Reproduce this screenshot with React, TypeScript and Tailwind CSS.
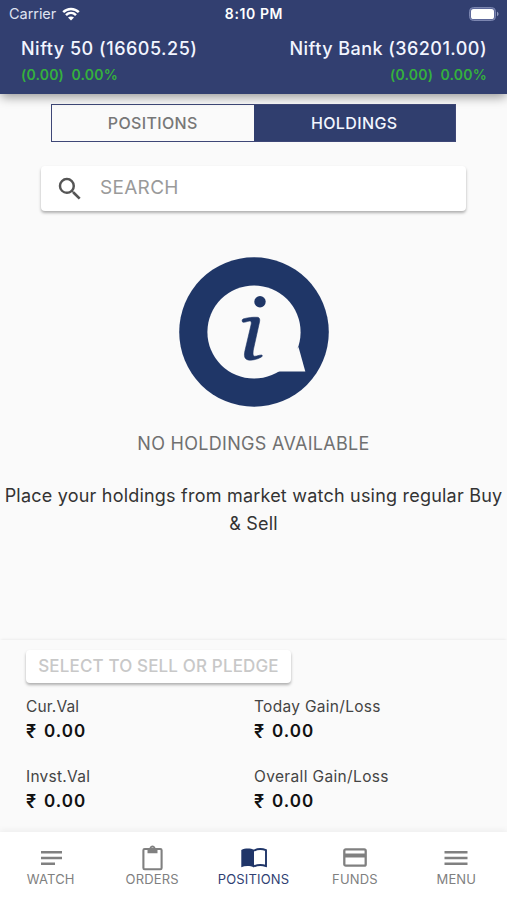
import React from "react";
import { MdSearch } from "react-icons/md";

function Wifi() {
  return (
    <svg width="18" height="14" viewBox="0 0 18 14" fill="none" stroke="#fff" strokeWidth="2.5">
      <path d="M1.2 5.2C5.6 .8 12.4 .8 16.8 5.2" />
      <path d="M4 8.2C6.9 5.4 11.1 5.4 14 8.2" />
      <path d="M9 13.6L6 10.6C7.7 9 10.3 9 12 10.6Z" fill="#fff" stroke="none" />
    </svg>
  );
}

function Battery() {
  return (
    <svg width="30" height="14" viewBox="0 0 30 14">
      <rect x="0.5" y="0.5" width="26" height="13" rx="4" fill="#5d689a" stroke="#7c86b0" />
      <rect x="2" y="2" width="23" height="10" rx="2.6" fill="#fff" />
      <path d="M28 4.8c2 .7 2 3.7 0 4.4z" fill="#8f99bd" />
    </svg>
  );
}

function Notes() {
  return (
    <svg width="22" height="16" viewBox="0 0 22 16" fill="none" stroke="currentColor" strokeWidth="2.4" className="translate-x-[0.5px]">
      <path d="M.5 2.200H21.500M.5 8H21.500M.5 13.800H14.500" />
    </svg>
  );
}

function Clipboard() {
  return (
    <svg width="22" height="26" viewBox="0 0 22 26" className="translate-x-[0.5px]">
      <rect x="1.900" y="4" width="18.200" height="20.300" rx="1.300" fill="none" stroke="currentColor" strokeWidth="2.100" />
      <path fillRule="evenodd" d="M6 3H8C8.500 1.500 9.600 .5 11 .5S13.500 1.500 14 3H16V8.200H6ZM11 2.400A1.300 1.300 0 1 0 11 5A1.300 1.300 0 1 0 11 2.400Z" fill="currentColor" />
    </svg>
  );
}

function Menu() {
  return (
    <svg width="24" height="16" viewBox="0 0 24 16" fill="none" stroke="currentColor" strokeWidth="2.400">
      <path d="M.5 2.200H23.500M.5 8H23.500M.5 13.800H23.500" />
    </svg>
  );
}

function Card() {
  return (
    <svg width="24" height="19" viewBox="0 0 24 19">
      <rect x="1.300" y="1.300" width="21.400" height="16.400" rx="1.500" fill="none" stroke="currentColor" strokeWidth="2.300" />
      <path d="M1 5.500H23V9.500H1Z" fill="currentColor" />
    </svg>
  );
}

function OpenBook() {
  return (
    <svg width="26" height="20" viewBox="0 0 26 20">
      <path d="M.3 1.900C4 0 9.400 -.1 13 1.800V19.400C9 17.600 4 17.600 .3 19.200Z" fill="#1f3568" />
      <path d="M13 2.600C16.400 .9 21.400 .8 25 2.200V18C21 16.600 16.800 16.700 13 18.300" fill="none" stroke="#1f3568" strokeWidth="1.900" />
    </svg>
  );
}

function InfoBadge() {
  return (
    <svg width="150" height="150" viewBox="0 0 150 150">
      <circle cx="75" cy="75" r="74.8" fill="#1f3667" />
      <circle cx="75" cy="75" r="46.6" fill="#fafafa" />
      <path d="M119.500 90L126.300 114.500H96Z" fill="#fafafa" />
      <circle cx="81" cy="44.700" r="5.700" fill="#1f3667" />
      <path d="M64 62C69 60.500 74 60 78.500 60.300C80.800 60.600 81 62.500 80.500 65L74.500 92C73.700 96.500 73.800 98.800 75.500 99.200C77.700 99.500 80 98 82.500 98C83.800 98.200 83.500 99.500 82 100.300C78 102.500 72 103.700 69 102.900C65.300 102 64.800 98.500 66 93.500L72 68C72.800 64.800 72 64 70.500 64.100C68.200 64.200 66.500 65.400 64.300 65.300C62.800 65 62.700 62.800 64 62Z" fill="#1f3667" stroke="#1f3667" strokeWidth=".6" />
    </svg>
  );
}

function Amount({ label, value, labelClass }: { label: string; value: string; labelClass: string }) {
  return (
    <div className="h-[70px]">
      <div className={labelClass}>{label}</div>
      <div className="flex text-[17px] leading-[25px] font-semibold text-[#111]">
        <span className="w-[18px] text-[18px]">₹</span>
        <span className="tracking-[1px]">{value}</span>
      </div>
    </div>
  );
}

function NavItem({ label, active, children }: { label: string; active?: boolean; children: React.ReactNode }) {
  return (
    <div className={active ? "flex flex-1 flex-col items-center text-[#303f73]" : "flex flex-1 flex-col items-center text-[#808080]"}>
      <div className="flex h-[27px] items-center justify-center">{children}</div>
      <div className="text-[13px] leading-[16px] tracking-[0.15px]">{label}</div>
    </div>
  );
}

export default function App() {
  return (
    <div className="flex h-[900px] w-[507px] flex-col overflow-hidden bg-[#fafafa] font-['Inter',sans-serif] whitespace-nowrap">
      <header className="relative h-[94px] shrink-0 bg-[#323f70] shadow-[0_4px_10px_-1px_rgba(0,0,0,0.4)]">
        <div className="grid h-[27px] grid-cols-3 items-center pr-[8px] pl-[9px] text-[14px] text-white">
          <div className="flex items-center gap-1.5 text-[#dfe3f0]">
            <span className="text-[14.5px] tracking-[-0.05px]">Carrier</span>
            <Wifi />
          </div>
          <div className="text-center font-semibold tracking-[0.6px]">8:10 PM</div>
          <div className="flex justify-end"><Battery /></div>
        </div>
        <div className="flex justify-between px-[21px] pt-[8px]">
          <div>
            <div className="text-[18px] leading-[27px] font-medium tracking-[0.5px] text-[#f2f5ff]">Nifty 50 (16605.25)</div>
            <div className="text-[14px] leading-[25px] font-semibold tracking-[0.2px] text-[#35b13d]">(0.00)&nbsp; 0.00%</div>
          </div>
          <div className="-mr-px text-right">
            <div className="text-[18px] leading-[27px] font-medium tracking-[0.45px] text-[#f2f5ff]">Nifty Bank (36201.00)</div>
            <div className="text-[14px] leading-[25px] font-semibold tracking-[0.2px] text-[#35b13d]">(0.00)&nbsp; 0.00%</div>
          </div>
        </div>
      </header>

      <div className="mx-auto mt-[10px] flex h-[38px] w-[405px] shrink-0 border border-[#3e4777] text-[16px] leading-[37px] font-medium">
        <div className="flex-1 text-center tracking-[0.35px] text-[#777]">POSITIONS</div>
        <div className="flex-1 bg-[#303e6e] text-center tracking-[0.4px] text-[#f2f6ff]">HOLDINGS</div>
      </div>

      <div className="mx-auto mt-[24px] flex h-[45px] w-[425px] shrink-0 items-center rounded-[4px] bg-white pl-[14px] shadow-[0_2px_3px_rgba(0,0,0,0.3)]">
        <MdSearch size={30} color="#555" />
        <span className="ml-[15px] text-[19px] tracking-[0.3px] text-[#9a9a9a]">SEARCH</span>
      </div>

      <main className="flex h-[429px] shrink-0 flex-col items-center pt-[46px]">
        <InfoBadge />
        <div className="mt-[24px] text-[18px] leading-[26px] tracking-[0.3px] text-[#707070]">NO HOLDINGS AVAILABLE</div>
        <div className="mt-[25px] text-center text-[18px] leading-[28px] tracking-[0.21px] text-[#333]">
          Place your holdings from market watch using regular Buy<br />&amp; Sell
        </div>
      </main>

      <section className="h-[192px] shrink-0 px-[26px] pt-[10px] shadow-[0_-1px_3px_-1px_rgba(0,0,0,0.1)]">
        <div className="h-[33px] w-[265px] rounded-[4px] bg-white text-center text-[17px] leading-[33px] font-medium tracking-[0.15px] text-[#c8c8c8] shadow-[0_2px_3px_rgba(0,0,0,0.3)]">
          SELECT TO SELL OR PLEDGE
        </div>
        <div className="mt-[11px] grid grid-cols-[228px_1fr]">
          <Amount label="Cur.Val" value="0.00" labelClass="text-[15.5px] leading-[25px] tracking-[0.15px] text-[#444]" />
          <Amount label="Today Gain/Loss" value="0.00" labelClass="text-[15.5px] leading-[25px] tracking-[0.3px] text-[#444]" />
          <Amount label="Invst.Val" value="0.00" labelClass="text-[15.5px] leading-[25px] tracking-[0.25px] text-[#444]" />
          <Amount label="Overall Gain/Loss" value="0.00" labelClass="text-[15.5px] leading-[25px] tracking-[0.35px] text-[#444]" />
        </div>
      </section>

      <nav className="flex flex-1 bg-white pt-[12px] shadow-[0_-2px_6px_rgba(0,0,0,0.05)]">
        <NavItem label="WATCH"><Notes /></NavItem>
        <NavItem label="ORDERS"><Clipboard /></NavItem>
        <NavItem label="POSITIONS" active><OpenBook /></NavItem>
        <NavItem label="FUNDS"><Card /></NavItem>
        <NavItem label="MENU"><Menu /></NavItem>
      </nav>
    </div>
  );
}
